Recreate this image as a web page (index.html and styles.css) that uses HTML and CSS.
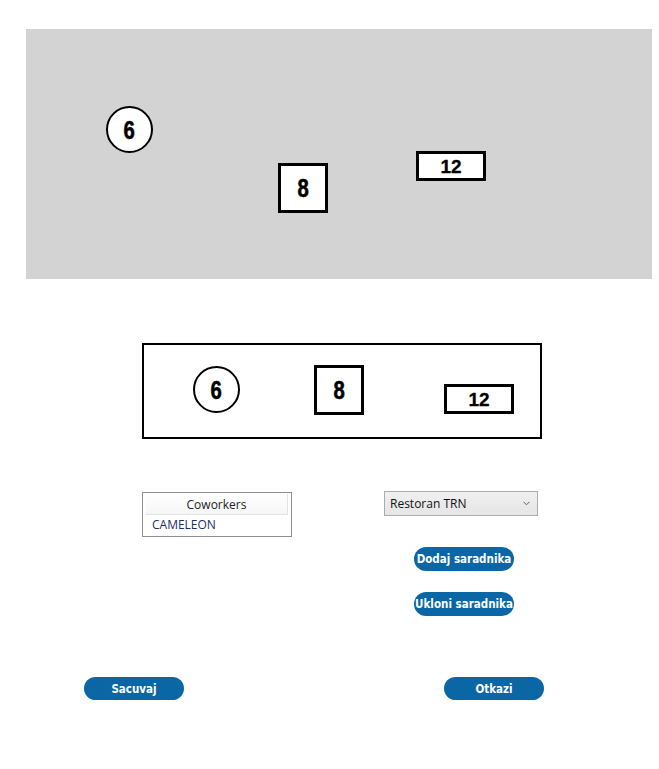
FILE: index.html
```html
<!DOCTYPE html>
<html>
<head>
<meta charset="utf-8">
<link rel="stylesheet" href="styles.css">
</head>
<body>
<div class="page">
  <div class="floor">
    <div class="tbl round t-a"><span>6</span></div>
    <div class="tbl square t-b"><span>8</span></div>
    <div class="tbl wide t-c"><span>12</span></div>
  </div>
  <div class="preview">
    <div class="tbl round p-a"><span>6</span></div>
    <div class="tbl square p-b"><span>8</span></div>
    <div class="tbl wide p-c"><span>12</span></div>
  </div>
  <div class="controls">
    <div class="listbox">
      <div class="lb-head">Coworkers</div>
      <div class="lb-item">CAMELEON</div>
    </div>
    <div class="side">
      <div class="combo"><span>Restoran TRN</span><svg class="chev" width="7" height="5" viewBox="0 0 7 5"><path d="M0.5 0.8 L3.5 3.8 L6.5 0.8" fill="none" stroke="#606060" stroke-width="1"/></svg></div>
      <button class="btn add">Dodaj saradnika</button>
      <button class="btn remove">Ukloni saradnika</button>
    </div>
  </div>
  <div class="footer">
    <button class="btn wide-btn">Sacuvaj</button>
    <button class="btn wide-btn">Otkazi</button>
  </div>
</div>
</body>
</html>
```
FILE: styles.css
```css
html, body {
  margin: 0;
  padding: 0;
  background: #ffffff;
}
.page {
  width: 659px;
  height: 769px;
  position: relative;
  font-family: "Open Sans", "Noto Sans", sans-serif;
}
.floor {
  position: relative;
  margin: 29px 0 0 26px;
  width: 626px;
  height: 250px;
  background: #d3d3d3;
}
.tbl {
  position: absolute;
  box-sizing: border-box;
  background: #ffffff;
  border: 3px solid #000000;
  display: flex;
  align-items: center;
  justify-content: center;
  color: #000;
}
.tbl span {
  display: inline-block;
  font-family: "Liberation Sans", "DejaVu Sans", sans-serif;
  font-weight: bold;
  font-size: 26px;
  line-height: 1;
  transform: scaleX(0.78);
  -webkit-text-stroke: 0.6px #000;
}
.round {
  width: 47px;
  height: 47px;
  border-radius: 50%;
  border-width: 2px;
}
.square {
  width: 50px;
  height: 50px;
}
.wide {
  width: 70px;
  height: 30px;
}
.wide span {
  font-size: 19px;
  transform: none;
  -webkit-text-stroke: 0.3px #000;
}
.t-a { left: 80px; top: 77px; }
.t-b { left: 252px; top: 134px; }
.t-c { left: 390px; top: 122px; }

.preview {
  position: relative;
  box-sizing: border-box;
  margin: 64px 0 0 142px;
  width: 400px;
  height: 96px;
  border: 2px solid #000;
}
.p-a { left: 49px; top: 21px; }
.p-b { left: 170px; top: 20px; }
.p-c { left: 300px; top: 39px; }

.controls {
  display: flex;
  margin: 53px 0 0 142px;
  height: 130px;
}
.listbox {
  box-sizing: border-box;
  width: 150px;
  height: 45px;
  border: 1px solid #8f8f8f;
  padding: 1px 3px 0 3px;
}
.lb-head {
  height: 20px;
  border-bottom: 1px solid #e3e3e3;
  border-right: 1px solid #e3e3e3;
  background: linear-gradient(#ffffff, #f6f6f7);
  font-size: 12px;
  line-height: 21px;
  text-align: center;
  color: #222;
}
.lb-item {
  font-size: 12px;
  line-height: 20px;
  padding-left: 6px;
  color: #1c2f6a;
}
.side {
  margin-left: 92px;
  margin-top: -1px;
  display: flex;
  flex-direction: column;
  align-items: flex-start;
}
.combo {
  box-sizing: border-box;
  width: 154px;
  height: 25px;
  border: 1px solid #acacac;
  background: linear-gradient(#f0f0f0, #e5e5e5);
  display: flex;
  align-items: center;
  justify-content: space-between;
  padding: 0 7px 0 5px;
  font-size: 12px;
  color: #111;
}
.btn {
  font-family: "DejaVu Sans Condensed", "DejaVu Sans", sans-serif;
  font-weight: bold;
  font-size: 11.5px;
  color: #ffffff;
  background: #0b66a6;
  border: none;
  border-radius: 12px;
  height: 24px;
  padding: 0;
  width: 100px;
  text-align: center;
  cursor: pointer;
}
.add { margin: 31px 0 0 30px; }
.remove { margin: 21px 0 0 30px; }
.footer {
  display: flex;
  margin: 55px 0 0 84px;
  gap: 260px;
}
.wide-btn { width: 100px; height: 23px; }
```
